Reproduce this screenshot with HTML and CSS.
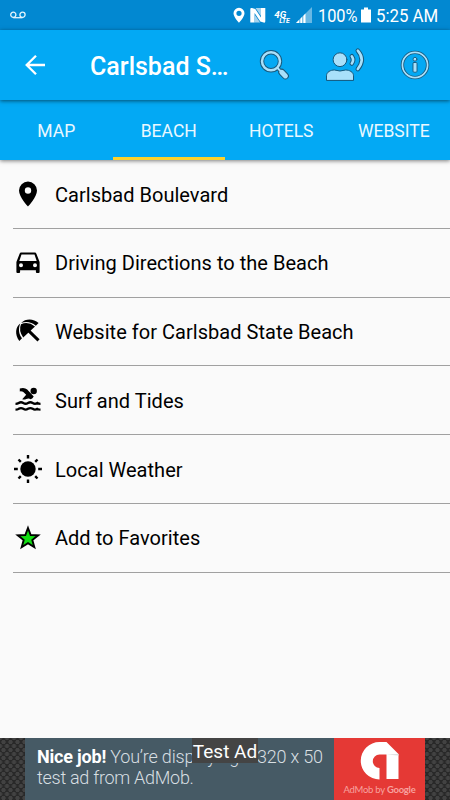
FILE: index.html
```html
<!DOCTYPE html>
<html lang="en">
<head>
<meta charset="utf-8">
<title>Carlsbad State Beach</title>
<link rel="stylesheet" href="styles.css">
</head>
<body>
<div class="screen">
  <div class="status">
    <svg class="voicemail" viewBox="0 0 16 8" width="16" height="8"><g fill="none" stroke="#e4f4fc" stroke-width="1.300"><circle cx="3.300" cy="3.800" r="2.600"/><circle cx="12.500" cy="3.800" r="2.600"/><path d="M3.300 6.700H12.500"/></g></svg>
    <svg class="status-icons" viewBox="233 6 80 20" width="80" height="20">
      <path fill="#fff" fill-rule="evenodd" d="M239 7.800a5.500 5.500 0 0 0-5.500 5.500c0 3.700 5.500 9.500 5.500 9.500s5.500-5.800 5.500-9.500A5.500 5.500 0 0 0 239 7.800zm0 2.900a2.600 2.600 0 1 1 0 5.200 2.600 2.600 0 0 1 0-5.200z"/>
      <path fill="#fff" d="M250.300 22.500V9.300q0-1.800 1.700-1.200l3.300 1 5.700 8.400V8h4.300v13.300q0 1.800-1.700 1.200l-3.300-1-5.700-8.400v9.400z"/>
      <path fill="#a5d3ee" d="M255.500 8h5.500v8zM254.600 22.500h5.500l-5.500-8z"/>
      <text class="net" x="274.300" y="18.200" font-size="9" textLength="12" lengthAdjust="spacingAndGlyphs">4G</text>
      <text class="net" x="279.300" y="23" font-size="6.500" textLength="10.500" lengthAdjust="spacingAndGlyphs">LTE</text>
      <path fill="#68b8e4" d="M312 7v16H296z"/>
      <path fill="#fff" d="M305.500 13.500V23H296z"/>
      <path stroke="#0288d1" stroke-width=".7" d="M299.800 18v5M302.800 15v8"/>
    </svg>
    <span class="percent"><span>100%</span></span>
    <svg class="battery" viewBox="0 0 10 16" width="10" height="16"><path fill="#fff" d="M3 .5h4v2h3V15.500H0V2.500h3z"/></svg>
    <span class="clock"><span>5:25 AM</span></span>
  </div>

  <header class="toolbar">
    <svg class="back" viewBox="25 54 21 22" width="21" height="22"><path fill="none" stroke="#fff" stroke-width="2.300" d="M45 65H27M36 55.700 26.700 65l9.300 9.300"/></svg>
    <h1>Carlsbad S…</h1>
    <svg class="actions" viewBox="255 45 180 40" width="180" height="40" stroke-linejoin="round" stroke-linecap="round">
      <g fill="none">
        <circle cx="271" cy="61.300" r="9" stroke="#17587c" stroke-width="4.400"/>
        <path stroke="#17587c" stroke-width="3.800" d="M277.500 68l3 3"/>
        <path stroke="#17587c" stroke-width="7" d="M281.800 72.300l3.600 3.600"/>
        <circle cx="271" cy="61.300" r="9" stroke="#a9e0fa" stroke-width="2.500"/>
        <path stroke="#a9e0fa" stroke-width="1.800" d="M277.500 68l3 3"/>
        <path stroke="#a9e0fa" stroke-width="5" d="M281.800 72.300l3.600 3.600"/>
      </g>
      <g fill="#a9e0fa" stroke="#17587c">
        <circle cx="340" cy="59.700" r="6.900"/>
        <path d="M326.500 80v-4.200c0-3.800 4-5.800 8-5.800q5.500 2 11 0c4 0 8 2 8 5.800V80z"/>
      </g>
      <g fill="none">
        <path stroke="#17587c" stroke-width="4.600" d="M351.800 56.300q2.600 3.700 0 7.200M357.800 50.700q7.800 8.700 0 18.300"/>
        <path stroke="#a9e0fa" stroke-width="2.600" d="M351.800 56.300q2.600 3.700 0 7.200M357.800 50.700q7.800 8.700 0 18.300"/>
        <circle cx="415" cy="65" r="12.600" stroke="#17587c" stroke-width="3.400"/>
        <circle cx="415" cy="65" r="12.600" stroke="#a9e0fa" stroke-width="1.700"/>
        <circle cx="415" cy="59.200" r="1.900" fill="#a9e0fa" stroke="#17587c" stroke-width=".9"/>
        <rect x="413" y="62.500" width="4" height="9.700" rx="1" fill="#a9e0fa" stroke="#17587c" stroke-width=".9"/>
      </g>
    </svg>
  </header>

  <nav class="tabs">
    <a>MAP</a><a class="active">BEACH</a><a>HOTELS</a><a>WEBSITE</a>
  </nav>

  <ul class="list">
    <li><svg viewBox="0 0 30 30"><path fill-rule="evenodd" d="M15 2.500a9 9 0 0 0-9 9C6 18 15 27.500 15 27.500S24 18 24 11.500a9 9 0 0 0-9-9zm0 5.800a3.200 3.200 0 1 1 0 6.400 3.200 3.200 0 0 1 0-6.400z"/></svg><span>Carlsbad Boulevard</span></li>
    <li><svg viewBox="0 0 30 30"><path fill-rule="evenodd" d="M6.500 6Q6.900 4.600 8.300 4.600h13.400q1.400 0 1.800 1.400l3.100 8v10q0 1-1 1h-1.700q-1 0-1-1v-1.800H7.100V24q0 1-1 1H4.400q-1 0-1-1V14zM8.500 6.500 6.300 13h17.400L21.500 6.500zM8 15.200a2 2 0 1 0 0 4 2 2 0 0 0 0-4zm14 0a2 2 0 1 0 0 4 2 2 0 0 0 0-4z"/></svg><span>Driving Directions to the Beach</span></li>
    <li><svg viewBox="0 0 30 30"><path d="M6.300 25C1.500 18.500 2.500 10.800 7.200 7.600 5 13.500 6 18.500 9 22.300zM10.200 21.500Q5.300 14.500 8 8.300 15 5 22 10.500zM8.200 7C12.500 2.300 20.500 2.400 25.600 7L22.800 9.700C18.500 6 13.500 5 8.200 7z"/><path stroke="#000" stroke-width="3" d="m16 15.200 9.500 9.200"/></svg><span>Website for Carlsbad State Beach</span></li>
    <li><svg viewBox="0 0 30 30"><circle cx="20.700" cy="6" r="3.200"/><path d="M6.800 3.400q5-1.300 7.400 1.200l6.500 6.800q-1 2-3 2.800-2-1.500-4.500-.2-2 1-4 .2l4-4.400-2.900-2.700q-1-.9-3.500-.7z"/><g fill="none" stroke="#000" stroke-width="2.300"><path d="M2.500 18.900q2 0 3.200-.9 2.300-1.500 4.600 0t4.700 0 4.700 0 4.600 0q1.200.9 3.200.9"/><path d="M2.500 24.700q2 0 3.200-.9 2.300-1.500 4.600 0t4.700 0 4.700 0 4.600 0q1.200.9 3.200.9"/></g></svg><span>Surf and Tides</span></li>
    <li><svg viewBox="0 0 30 30"><circle cx="15" cy="15" r="7.700"/><path stroke="#000" stroke-width="2.400" d="M15 1v3.500M15 25.500V29M1 15h3.800M25.200 15H29M5.500 5.500l2.300 2.300M22.200 22.200l2.300 2.300M5.500 24.500l2.300-2.300M22.200 7.800l2.300-2.300"/></svg><span>Local Weather</span></li>
    <li><svg viewBox="0 0 30 30"><path fill="#12dd12" stroke="#000" stroke-width="1.900" d="m15 5 2.700 7 7.500.3-5.900 4.700 2 7.200-6.300-4.100-6.300 4.100 2-7.200-5.900-4.700 7.500-.3z"/></svg><span>Add to Favorites</span></li>
  </ul>

  <footer class="ad-strip">
    <div class="ad">
      <p class="copy"><span class="line first"><b>Nice job!</b> You’re displaying a 320 x 50</span><span class="line second">test ad from AdMob.</span></p>
      <div class="brand">
        <svg viewBox="0 0 40 38" width="40" height="38"><path fill="#fff" d="M19.500 0h7L38.500 12v25H26.500V12.500h-7a6.700 6.700 0 0 0 0 13.400V37.500A18.750 18.750 0 0 1 19.500 0z"/><path fill="#ddd" d="M26.500 12.500 38.500 12v1.500z"/></svg>
        <span>AdMob by <b>Google</b></span>
      </div>
    </div>
    <span class="badge">Test Ad</span>
  </footer>
</div>
</body>
</html>
```
FILE: styles.css
```css
* { box-sizing: border-box; }
body { margin: 0; font-family: Roboto, "Liberation Sans", sans-serif; }
svg { display: block; flex: none; }
.screen { width: 450px; height: 800px; background: #fafafa; display: flex; flex-direction: column; overflow: hidden; }

.status { flex: none; height: 30px; background: #0288d1; color: #fff; display: flex; align-items: center; font-size: 19px; line-height: 30px; }
.voicemail { margin-left: 10px; }
.status-icons { margin-left: 207px; margin-top: 2px; }
.net { fill: #fff; font-weight: 700; font-style: italic; }
.percent, .clock { white-space: nowrap; }
.percent { width: 40px; margin-left: 5px; }
.clock { width: 62px; margin-left: 5px; }
.percent span, .clock span { display: inline-block; transform-origin: left; margin-top: 2px; }
.percent span { transform: scaleX(.86); }
.clock span { transform: scaleX(.885); }
.battery { margin-left: 3px; }

.toolbar { flex: none; height: 70px; background: #03a9f4; display: flex; align-items: center; z-index: 2; box-shadow: 0 1px 4px rgba(0, 0, 0, .55); }
.back { margin-left: 25px; }
.toolbar h1 { margin: 3px 0 0 44px; width: 165px; font-size: 25px; font-weight: 500; line-height: 30px; color: #fff; white-space: nowrap; }

.tabs { flex: none; height: 60px; display: grid; grid-template-columns: repeat(4, 1fr); background: #03a9f4; z-index: 1; box-shadow: 0 1px 4px rgba(0, 0, 0, .5); }
.tabs a { display: flex; align-items: center; justify-content: center; padding-top: 5px; border-bottom: 3px solid transparent; color: #eaf8ff; font-size: 17.500px; }
.tabs .active { border-bottom-color: #fdd22b; }

.list { flex: none; margin: 0; padding: 0 0 0 12.600px; list-style: none; }
.list li { height: 68.750px; display: flex; align-items: center; border-bottom: 1px solid #a0a0a0; font-size: 20px; color: #000; }
.list svg { width: 30px; height: 30px; margin-right: 12.400px; }
.list span { white-space: nowrap; letter-spacing: .03px; padding-top: 1.500px; }

.ad-strip { flex: none; margin-top: auto; height: 62px; position: relative; display: flex; justify-content: center; background-color: #292929; background-image: radial-gradient(circle, #424242 1.800px, transparent 2.500px), radial-gradient(circle, #424242 1.800px, transparent 2.500px); background-size: 7px 8px; background-position: 0 0, 3.500px 4px; }
.ad { width: 400px; display: flex; background: #465a65; }
.copy { width: 309px; margin: 0; padding: 8px 0 0 12px; font-size: 18px; line-height: 21px; color: #d8dfe2; white-space: nowrap; font-weight: 300; }
.line { display: block; }
.first { letter-spacing: -.2px; }
.second { letter-spacing: -.28px; }
.copy b { color: #fff; font-weight: 700; }
.brand { width: 91px; background: #e53935; color: #f7a19f; display: flex; flex-direction: column; align-items: center; padding-top: 4px; font-size: 9.500px; line-height: 20px; letter-spacing: -.25px; white-space: nowrap; font-family: Lato, sans-serif; }
.brand b { font-weight: 700; }
.badge { position: absolute; left: 192px; top: 0; width: 66px; height: 25px; background: #444; color: #fff; font-size: 19px; line-height: 27px; text-align: center; white-space: nowrap; }
```
